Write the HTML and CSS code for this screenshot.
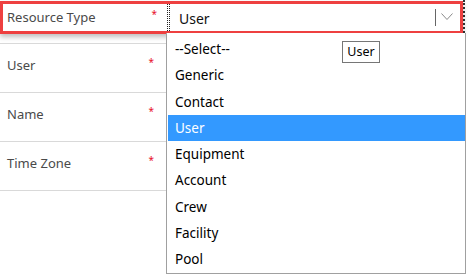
FILE: index.html
```html
<!DOCTYPE html>
<html lang="en">
<head>
    <meta charset="UTF-8">
    <meta name="viewport" content="width=device-width, initial-scale=1.0">
    <title>Resource</title>
    <link rel="stylesheet" href="styles.css">
</head>
<body>
    <div class="form">
        <div class="field active">
            <div class="box">
                <div class="label">Resource Type <span class="req">*</span></div>
                <div class="select">
                    <span class="value">User</span>
                    <span class="arrow">
                        <svg width="12" height="8" viewBox="0 0 12 8"><path d="M0.5 0.5 L6 6.5 L11.5 0.5" fill="none" stroke="#8a8a8a" stroke-width="1"/></svg>
                    </span>
                </div>
            </div>
            <div class="edge"></div>
        </div>
        <div class="sep"></div>

        <div class="field">
            <div class="label">User <span class="req">*</span></div>
        </div>
        <div class="field">
            <div class="label">Name <span class="req">*</span></div>
        </div>
        <div class="field">
            <div class="label">Time Zone <span class="req">*</span></div>
        </div>

        <!-- open dropdown of the select -->
        <ul class="options">
            <li>--Select--</li>
            <li>Generic</li>
            <li>Contact</li>
            <li class="hover">User</li>
            <li>Equipment</li>
            <li>Account</li>
            <li>Crew</li>
            <li>Facility</li>
            <li>Pool</li>
        </ul>

        <div class="tip">User</div>
    </div>
</body>
</html>
```

FILE: styles.css
```css
body {
    margin: 0;
    background: white;
    font-family: "Noto Sans", "Open Sans", sans-serif;
    font-size: 13px;
}
.form {
    position: relative;
    width: 470px;
    height: 276px;
}
.field {
    width: 167px;
    height: 49px;
    border-bottom: 1px solid #d9d9d9;
    box-sizing: border-box;
}
.field .label {
    display: flex;
    justify-content: space-between;
    padding: 11px 13px 0 7px;
    color: #4a4a4a;
    line-height: 20px;
}
.req {
    color: #e8102a;
    font-size: 10px;
    line-height: 14px;
}
.field.active {
    width: 470px;
    height: 34px;
    border: none;
    padding-top: 1px;
    display: flex;
}
.box {
    width: 463px;
    height: 33px;
    box-sizing: border-box;
    border: 3px solid #ee4040;
    display: flex;
    box-shadow: 0 3px 5px rgba(0, 0, 0, 0.25);
    position: relative;
}
.box .label {
    width: 164px;
    box-sizing: border-box;
    padding: 3px 10px 0 4px;
    color: #4a4a4a;
    display: flex;
    justify-content: space-between;
    line-height: 20px;
}
.edge {
    width: 0;
    height: 33px;
    margin-top: -1px;
    border-left: 2px dotted #333;
}
.sep {
    width: 167px;
    height: 9px;
    border-bottom: 1px solid #d9d9d9;
}
.select {
    flex: 1;
    display: flex;
    align-items: center;
    border-left: 1px dotted #222;
    padding-left: 1px;
}
.select .value {
    flex: 1;
    align-self: stretch;
    border-left: 1px dotted #222;
    padding: 5px 0 0 9px;
    font-size: 14px;
    color: #111;
}
.arrow {
    border-left: 1px solid #666;
    height: 17px;
    padding: 4px 4px 0 5px;
    box-sizing: border-box;
    margin-right: 3px;
}
.arrow svg {
    display: block;
}
.options {
    position: absolute;
    top: 33px;
    left: 166px;
    width: 300px;
    height: 241px;
    box-sizing: border-box;
    margin: 0;
    padding: 3px 0 0 1px;
    list-style: none;
    border: 1px solid #a0a0a0;
    border-top: none;
    background: white;
    font-size: 13.5px;
}
.options li {
    height: 26.25px;
    line-height: 26px;
    padding-left: 7px;
    color: #000;
}
.options li.hover {
    background: #3399ff;
    color: white;
}
.tip {
    position: absolute;
    top: 41px;
    left: 342px;
    width: 38px;
    height: 22px;
    line-height: 20px;
    text-align: center;
    box-sizing: border-box;
    border: 1px solid #767676;
    background: white;
    font-size: 12.5px;
    color: #000;
}
```
